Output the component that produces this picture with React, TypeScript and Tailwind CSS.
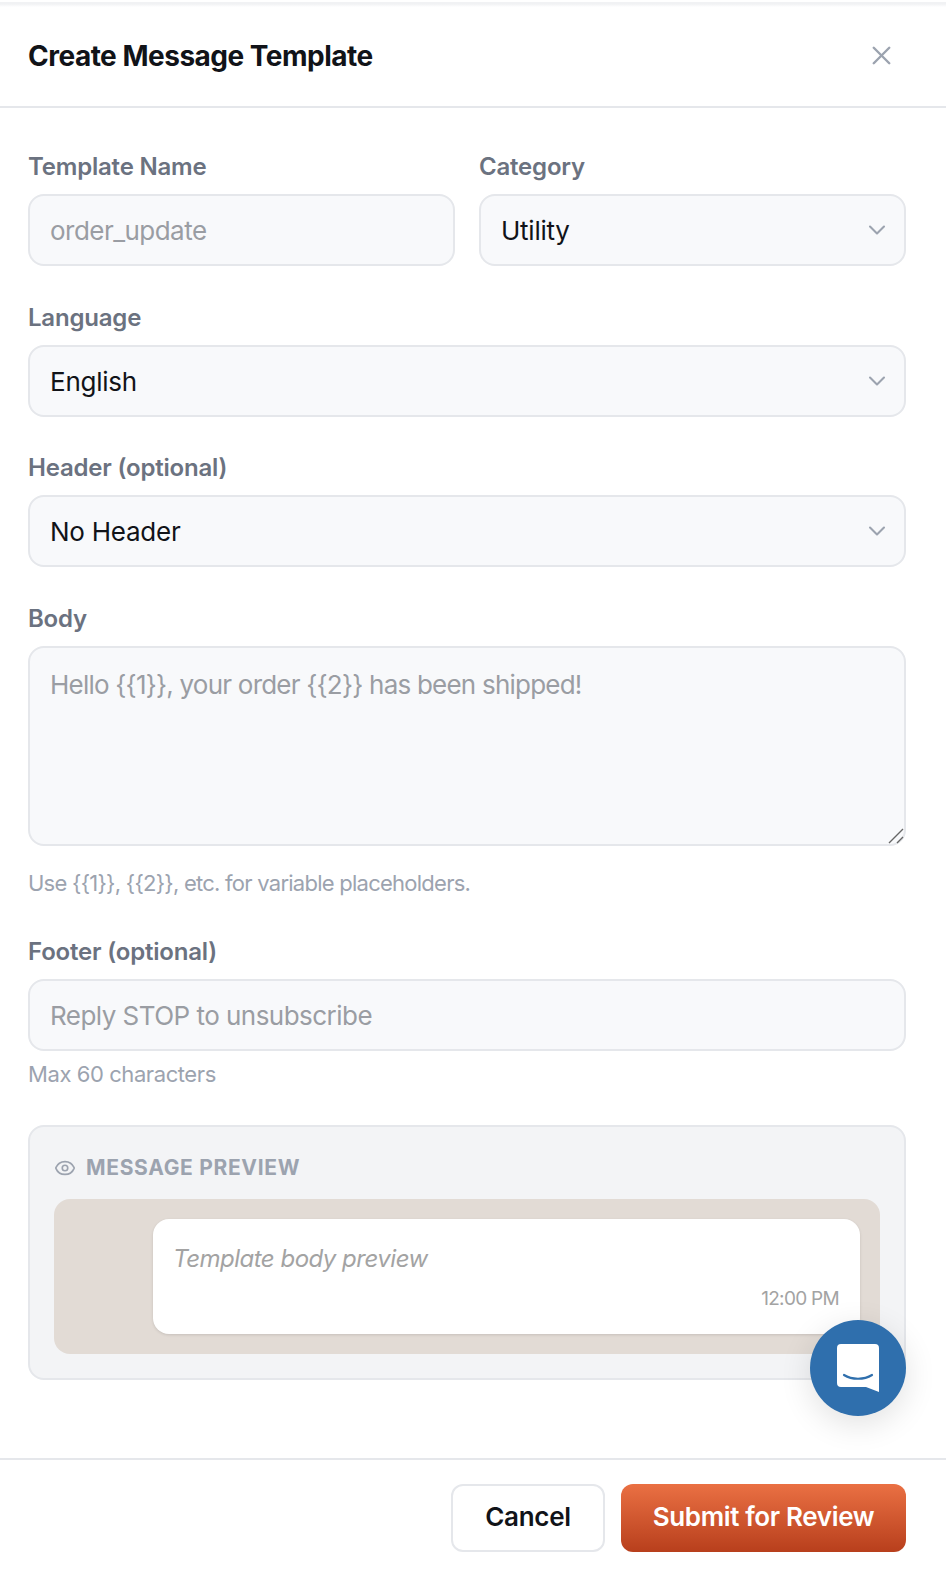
import React from 'react';
import { ChevronDown, Eye, X } from 'lucide-react';

const labelCls = 'block text-[24px] leading-[32px] font-semibold text-[#6b7280] tracking-[-0.2px] mb-[11px]';
const fieldCls =
  'w-full h-[72px] rounded-[16px] border-2 border-[#e5e7eb] bg-[#f8f9fb] px-[20px] text-[26px] tracking-[-0.53px] text-[#111318] outline-none placeholder:text-[#9a9da3]';

const SelectField = ({ value }: { value: string }) => (
  <div className={`${fieldCls} flex items-center justify-between`}>
    <span className="tracking-[-0.25px]">{value}</span>
    <ChevronDown className="w-[28px] h-[28px] text-[#9ca3af] mr-[-7px]" strokeWidth={1.8} />
  </div>
);

export default function App() {
  return (
    <div className="relative w-[946px] h-[1576px] bg-white overflow-hidden font-['Inter',sans-serif]">
      <div className="h-[2px] bg-white" />
      <div className="h-[2px] bg-[#f1f2f4]" />
      <div className="h-[3px] bg-gradient-to-b from-[#f1f2f4] to-white" />
      {/* Header */}
      <div className="h-[101px] pb-[2px] border-b-2 border-[#e5e7eb] flex items-center justify-between pl-[28px] pr-[49px]">
        <h1 className="text-[28px] font-bold text-[#111318] tracking-[-0.5px]">Create Message Template</h1>
        <X className="w-[31px] h-[31px] text-[#9ca3af]" strokeWidth={1.9} />
      </div>

      {/* Form */}
      <div className="pl-[28px] pr-[40px] pt-[43px]">
        <div className="grid grid-cols-2 gap-x-[24px]">
          <div>
            <label className={labelCls}>Template Name</label>
            <input className={fieldCls} placeholder="order_update" />
          </div>
          <div>
            <label className={labelCls}>Category</label>
            <SelectField value="Utility" />
          </div>
        </div>

        <div className="mt-[36px]">
          <label className={labelCls}>Language</label>
          <SelectField value="English" />
        </div>

        <div className="mt-[35px]">
          <label className={labelCls}>Header (optional)</label>
          <SelectField value="No Header" />
        </div>

        <div className="mt-[36px]">
          <label className={labelCls}>Body</label>
          <div className="relative">
            <textarea
              className={`${fieldCls} block h-[200px] py-[17px] resize-none leading-[40px] tracking-[-0.78px]`}
              placeholder="Hello {{1}}, your order {{2}} has been shipped!"
            />
            <svg className="absolute right-[2px] bottom-[2px] w-[16px] h-[16px]" viewBox="0 0 16 16" fill="none" stroke="#666" strokeWidth="1.4">
              <path d="M1 15 15 1M9 15l6-6" />
            </svg>
          </div>
          <p className="mt-[21px] text-[22px] leading-[32px] tracking-[-0.75px] text-[#9ca3af]">Use {'{{1}}'}, {'{{2}}'}, etc. for variable placeholders.</p>
        </div>

        <div className="mt-[37px]">
          <label className={labelCls}>Footer (optional)</label>
          <input className={fieldCls} placeholder="Reply STOP to unsubscribe" />
          <p className="mt-[7px] text-[22px] leading-[32px] tracking-[-0.42px] text-[#9ca3af]">Max 60 characters</p>
        </div>

        {/* Message preview */}
        <div className="mt-[35px] h-[255px] rounded-[16px] border-2 border-[#e5e7eb] bg-[#f3f4f6] px-[24px] pt-[25px]">
          <div className="flex items-center gap-[10px] h-[32px]">
            <Eye className="w-[22px] h-[22px] text-[#9ca3af]" strokeWidth={1.8} />
            <span className="text-[21px] font-bold tracking-[0.67px] text-[#9ca3af]">MESSAGE PREVIEW</span>
          </div>
          <div className="mt-[15px] h-[155px] rounded-[16px] bg-[#e2dbd5] pl-[99px] pr-[20px] pt-[20px]">
            <div className="h-[115px] rounded-[16px] bg-white shadow-[0_1px_3px_rgba(0,0,0,0.12)] pl-[20px] pr-[21px] pt-[22px]">
              <p className="text-[24px] leading-[36px] italic tracking-[-0.5px] text-[#a3a3a3]">Template body preview</p>
              <p className="mt-[8px] text-right text-[19px] leading-[28px] tracking-[-0.7px] text-[#a3a3a3]">12:00 PM</p>
            </div>
          </div>
        </div>
      </div>

      {/* Footer */}
      <div className="absolute left-0 right-0 bottom-0 h-[118px] border-t-2 border-[#e5e7eb] flex justify-end gap-[16px] pt-[24px] pr-[40px]">
        <button className="w-[154px] h-[68px] pb-[3px] rounded-[12px] border-2 border-[#e5e7eb] bg-white text-[26px] tracking-[-0.3px] font-semibold text-[#111318]">
          Cancel
        </button>
        <button className="w-[285px] h-[68px] pb-[3px] rounded-[12px] bg-gradient-to-b from-[#ea7043] to-[#b83f1c] text-[26px] tracking-[-0.35px] font-semibold text-white">
          Submit for Review
        </button>
      </div>

      {/* Chat launcher */}
      <div className="absolute left-[810px] top-[1320px] w-[96px] h-[96px] rounded-full bg-[#2f6fad] flex items-center justify-center shadow-[0_8px_32px_rgba(0,0,0,0.12)]">
        <svg className="w-[42px] h-[48px]" viewBox="0 0 42 48">
          <path d="M4 0h34a4 4 0 0 1 4 4v44l-13-5H4a4 4 0 0 1-4-4V4a4 4 0 0 1 4-4Z" fill="#fff" />
          <path d="M7 31c8 5 20 5 28 0" fill="none" stroke="#2f6fad" strokeWidth="2.2" strokeLinecap="round" />
        </svg>
      </div>
    </div>
  );
}
